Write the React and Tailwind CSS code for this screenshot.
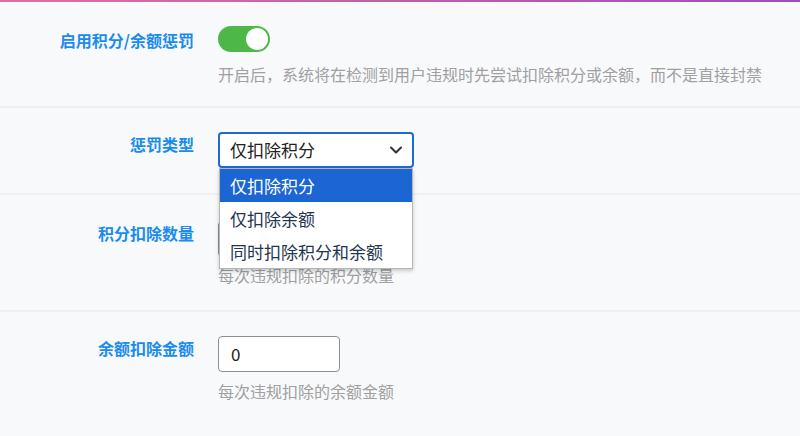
import React from 'react';
import { ChevronDown } from 'lucide-react';

const font = { fontFamily: '"Noto Sans CJK SC", "Noto Sans", sans-serif' };

const Row = ({ label, children, className = '', labelClass = '', last = false }) => (
    <div className={`flex items-start ${last ? '' : 'border-b-2 border-[#efeff1]'} ${className}`}>
        <div className={`w-[194px] text-right text-[16px] leading-6 font-bold text-[#1a8cf0] ${labelClass}`}>{label}</div>
        <div className="ml-6 flex-1">{children}</div>
    </div>
);

const Hint = ({ children, className = 'mt-[7px]' }) => (
    <p className={`text-[16px] leading-6 text-[#a0a0a0] ${className}`}>{children}</p>
);

const options = ['仅扣除积分', '仅扣除余额', '同时扣除积分和余额'];

export default function App() {
    return (
        <div className="w-[800px] h-[436px] overflow-hidden bg-[#f8f9fb]" style={font}>
            <div className="h-[2px] bg-gradient-to-r from-[#e06ea3] to-[#9a4fb8]" />

            <Row label="启用积分/余额惩罚" className="pt-6 pb-5" labelClass="pt-[2px]">
                <div className="w-[52px] h-[26px] rounded-full bg-[#4db847] flex items-center justify-end px-[2px]">
                    <div className="w-[22px] h-[22px] rounded-full bg-white" />
                </div>
                <Hint className="mt-[10px]">开启后，系统将在检测到用户违规时先尝试扣除积分或余额，而不是直接封禁</Hint>
            </Row>

            <Row label="惩罚类型" className="pt-6 pb-[25px]">
                <div className="relative w-[196px]">
                    <div className="h-9 border-2 border-[#1f6ad0] rounded-[4px] bg-white flex items-center justify-between pl-[10px] pr-[6px] text-[17px] text-[#222]">
                        <span>仅扣除积分</span>
                        <ChevronDown className="w-5 h-5 text-[#333]" strokeWidth={2.5} />
                    </div>
                    <div className="absolute left-[1px] top-[36px] w-[194px] bg-white border border-[#b5b5b5] shadow-[0_2px_4px_rgba(0,0,0,0.2)] z-10">
                        {options.map((o, i) => (
                            <div
                                key={o}
                                className={`h-[33px] flex items-center pl-[10px] text-[17px] ${i === 0 ? 'bg-[#1b66d2] text-white' : 'text-[#1f3550]'}`}
                            >
                                {o}
                            </div>
                        ))}
                    </div>
                </div>
            </Row>

            <Row label="积分扣除数量" className="pt-[26px] pb-[23px]">
                <div className="w-[122px] h-9 border border-[#8f8f8f] rounded-[4px] bg-white" />
                <Hint className="mt-[6px]">每次违规扣除的积分数量</Hint>
            </Row>

            <Row label="余额扣除金额" className="pt-6 pb-8" last>
                <div className="w-[122px] h-9 border border-[#8f8f8f] rounded-[4px] bg-white flex items-center px-3 text-[17px] text-[#222]">
                    0
                </div>
                <Hint>每次违规扣除的余额金额</Hint>
            </Row>
        </div>
    );
}
